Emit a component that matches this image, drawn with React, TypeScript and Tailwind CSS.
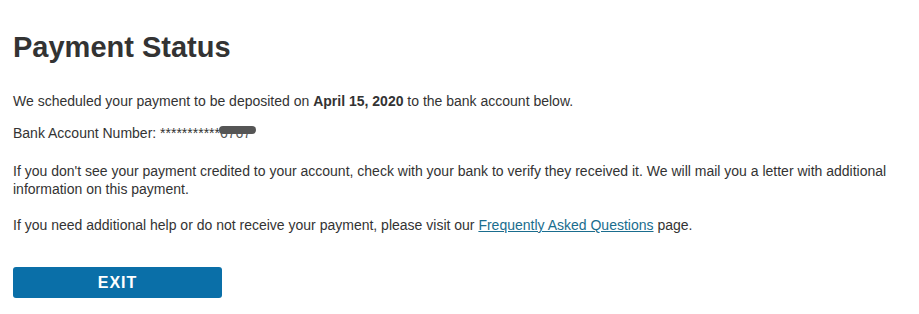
export default function App() {
  return (
    <div className="min-h-[314px] w-[919px] bg-white pl-[13px] pr-[20px] pt-[30px] text-[#333333]" style={{ fontFamily: '"Liberation Sans", Arial, sans-serif' }}>
      <h1 className="text-[29px] font-bold leading-[34px] text-[#333333]">Payment Status</h1>
      <p className="mt-[28px] text-[14px] leading-[18px]">
        We scheduled your payment to be deposited on <span className="font-bold">April 15, 2020</span> to the bank account below.
      </p>
      <p className="mt-[14px] text-[14px] leading-[18px]">
        <span>Bank Account Number: ***********</span>
        <span className="relative inline-block text-[#555555]">
          <span>6767</span>
          <span className="absolute left-[-1px] top-[2px] h-[8px] w-[37px] rounded-full bg-[#555555]" />
        </span>
      </p>
      <p className="mt-[20px] text-[14px] leading-[18px]">
        If you don't see your payment credited to your account, check with your bank to verify they received it. We will mail you a letter with additional information on this payment.
      </p>
      <p className="mt-[18px] text-[14px] leading-[18px]">
        If you need additional help or do not receive your payment, please visit our{" "}
        <a href="#" className="text-[#1a6d8e] underline">Frequently Asked Questions</a> page.
      </p>
      <button className="mt-[33px] flex h-[31px] w-[209px] items-center justify-center rounded-[3px] bg-[#0a6fa8] text-[16px] font-bold tracking-[1px] text-white">
        EXIT
      </button>
    </div>
  );
}
